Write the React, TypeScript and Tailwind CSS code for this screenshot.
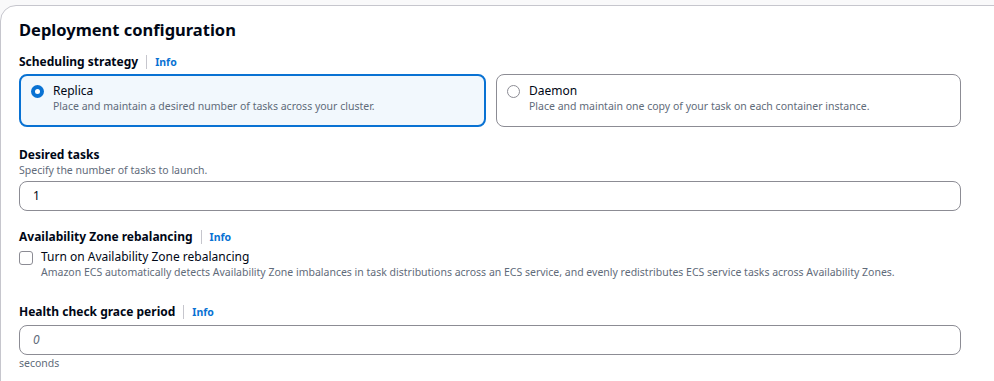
import React from "react";

const font = { fontFamily: '"Noto Sans", "Open Sans", sans-serif' };

function Label({ text, info }: { text: string; info?: boolean }) {
  return (
    <div className="flex h-[16px] items-center text-[12px] font-bold leading-[16px] text-[#000716]">
      <span>{text}</span>
      {info && (
        <>
          <span className="mx-[8px] h-[14px] w-px bg-[#c6c6cd]" />
          <span className="text-[10.5px] font-bold text-[#0972d3]">Info</span>
        </>
      )}
    </div>
  );
}

export default function App() {
  return (
    <div className="h-[381px] w-[994px] overflow-hidden bg-[#f9f9fa] pt-[5px]" style={font}>
      <div className="h-[420px] w-[1010px] rounded-tl-[16px] border border-[#c6c6cd] bg-white pl-[18px] pt-[13px]">
        <h2 className="text-[16.5px] font-bold leading-[22px] text-[#000716]">Deployment configuration</h2>

        <div className="mt-[13px]">
          <Label text="Scheduling strategy" info />
          <div className="mt-[4px] flex w-[942px] gap-[10px]">
            <div className="flex h-[53px] flex-1 gap-[9px] rounded-[8px] border-2 border-[#0972d3] bg-[#f2f8fd] pl-[10px] pt-[7px]">
              <span className="mt-[2px] flex h-[13px] w-[13px] items-center justify-center rounded-full bg-[#0972d3]">
                <span className="h-[5px] w-[5px] rounded-full bg-white" />
              </span>
              <div>
                <div className="text-[12px] leading-[16px] text-[#000716]">Replica</div>
                <div className="text-[10.5px] leading-[14px] text-[#5f6b7a]">
                  Place and maintain a desired number of tasks across your cluster.
                </div>
              </div>
            </div>
            <div className="flex h-[53px] flex-1 gap-[9px] rounded-[8px] border border-[#8c8c94] pl-[10px] pt-[8px]">
              <span className="mt-[2px] h-[13px] w-[13px] rounded-full border border-[#8c8c94] bg-white" />
              <div>
                <div className="text-[12px] leading-[16px] text-[#000716]">Daemon</div>
                <div className="text-[10.5px] leading-[14px] text-[#5f6b7a]">
                  Place and maintain one copy of your task on each container instance.
                </div>
              </div>
            </div>
          </div>
        </div>

        <div className="mt-[20px]">
          <Label text="Desired tasks" />
          <div className="text-[10.5px] leading-[14px] text-[#5f6b7a]">Specify the number of tasks to launch.</div>
          <div className="mt-[4px] flex h-[30px] w-[942px] items-center rounded-[8px] border border-[#8c8c94] px-[13px] text-[12px] text-[#000716]">
            1
          </div>
        </div>

        <div className="mt-[18px]">
          <Label text="Availability Zone rebalancing" info />
          <div className="mt-[4px] flex gap-[8px]">
            <span className="mt-[2px] h-[14px] w-[14px] rounded-[3px] border border-[#8c8c94] bg-white" />
            <div>
              <div className="text-[12px] leading-[16px] text-[#000716]">Turn on Availability Zone rebalancing</div>
              <div className="text-[10.5px] leading-[14px] text-[#5f6b7a]">
                Amazon ECS automatically detects Availability Zone imbalances in task distributions across an ECS service, and evenly redistributes ECS service tasks across Availability Zones.
              </div>
            </div>
          </div>
        </div>

        <div className="mt-[25px]">
          <Label text="Health check grace period" info />
          <div className="mt-[5px] flex h-[30px] w-[942px] items-center rounded-[8px] border border-[#8c8c94] px-[13px] text-[12px] italic text-[#5f6b7a]">
            0
          </div>
          <div className="mt-[1px] text-[10.5px] leading-[14px] text-[#5f6b7a]">seconds</div>
        </div>
      </div>
    </div>
  );
}
